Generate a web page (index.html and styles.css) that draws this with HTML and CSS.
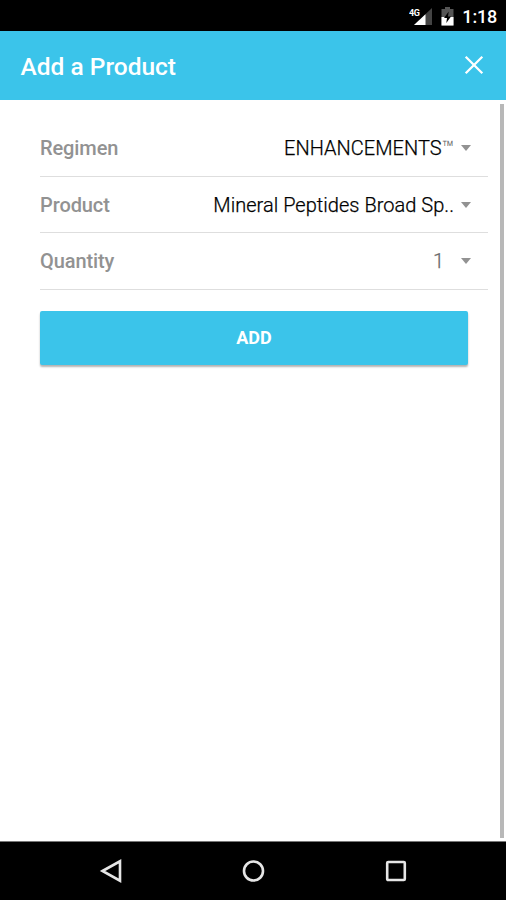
FILE: index.html
```html
<!DOCTYPE html>
<html lang="en">
<head>
<meta charset="utf-8">
<title>Add a Product</title>
<link rel="stylesheet" href="styles.css">
</head>
<body>
<div class="status">
  <svg class="signal" width="24" height="20" viewBox="0 0 24 20">
    <path d="M23 1V18H5Z" fill="#444"/>
    <path d="M16.500 7.200V18H5Z" fill="#fff"/>
    <text class="network" x="0" y="9">4G</text>
  </svg>
  <svg class="battery" width="13" height="19" viewBox="0 0 13 19">
    <path d="M4 0H9V2H12.500V18.500H.500V2H4Z" fill="#555"/>
    <path d="M.500 10H12.500V18.500H.500Z" fill="#fff"/>
    <path d="M7.700 4.500L3 11H6L5.300 16L10 9.500H7Z" fill="#000"/>
  </svg>
  <span class="clock">1:18</span>
</div>
<header class="toolbar">
  <h1>Add a Product</h1>
  <svg class="close" width="20" height="20" viewBox="0 0 20 20"><path d="M1.700 1.700L18.300 18.300M18.300 1.700L1.700 18.300"/></svg>
</header>
<main class="content">
  <div class="form">
    <div class="row"><span class="label">Regimen</span><span class="value">ENHANCEMENTS<span class="tm">™</span></span><span class="caret"></span></div>
    <div class="row"><span class="label">Product</span><span class="value">Mineral Peptides Broad Sp..</span><span class="caret"></span></div>
    <div class="row"><span class="label">Quantity</span><span class="value number">1</span><span class="caret"></span></div>
    <button class="add">ADD</button>
  </div>
  <div class="scrollbar"></div>
</main>
<nav class="navbar">
  <svg width="24" height="26" viewBox="0 0 24 26"><path d="M3.500 13L21 3.300V22.700Z"/></svg>
  <svg width="24" height="26" viewBox="0 0 24 26"><circle cx="11.500" cy="13" r="9.500"/></svg>
  <svg width="24" height="26" viewBox="0 0 24 26"><rect x="3.200" y="4" width="17.600" height="18" rx="1"/></svg>
</nav>
</body>
</html>
```

FILE: styles.css
```css
* { box-sizing: border-box; }
body {
  margin: 0;
  height: 900px;
  display: flex;
  flex-direction: column;
  overflow: hidden;
  background: #fff;
  font-family: Roboto, "Liberation Sans", sans-serif;
}
.status {
  height: 31px;
  flex: none;
  display: flex;
  align-items: center;
  justify-content: flex-end;
  padding: 2px 9px 0 0;
  background: #000;
  color: #fff;
}
.signal { margin-right: 8px; }
.network {
  font-size: 9px;
  font-weight: 700;
  letter-spacing: -.5px;
  fill: #fff;
  stroke: #000;
  stroke-width: 1px;
  paint-order: stroke;
}
.battery { margin-right: 8px; }
.clock { font-size: 18px; line-height: 28px; font-weight: 500; letter-spacing: -.2px; }
.toolbar {
  height: 69px;
  flex: none;
  display: flex;
  align-items: center;
  justify-content: space-between;
  padding: 2px 22px 0 20.500px;
  background: #3bc4ea;
  color: #fff;
}
h1 { margin: 0; font-size: 24.500px; line-height: 32px; font-weight: 500; }
.close { fill: none; stroke: #fff; stroke-width: 2.300; margin-bottom: 4px; }
.content { flex: 1; display: flex; justify-content: space-between; }
.form { width: 448px; margin: 20px 0 0 40px; }
.row {
  height: 56.700px;
  display: flex;
  align-items: center;
  border-bottom: 1px solid #dedede;
  padding-right: 17px;
}
.label { font-size: 20px; line-height: 28px; font-weight: 500; letter-spacing: -.1px; color: #929292; }
.value {
  margin-left: auto;
  font-size: 20px;
  line-height: 28px;
  font-weight: 300;
  letter-spacing: .03px;
  color: #000;
  -webkit-text-stroke: .25px currentColor;
  white-space: nowrap;
}
.tm { color: #666; -webkit-text-stroke: 0; }
.number { color: #666; margin-right: 10px; }
.caret {
  margin-left: 7px;
  border: 5.500px solid transparent;
  border-top: 6px solid #929292;
  border-bottom: 0;
}
.add {
  display: block;
  width: 428px;
  height: 54px;
  margin-top: 21px;
  border: 0;
  border-radius: 2px;
  padding: 0;
  background: #3bc4ea;
  box-shadow: 0 2px 2px rgba(0, 0, 0, .3);
  color: #fff;
  font: 700 18px/24px Roboto, "Liberation Sans", sans-serif;
}
.scrollbar { width: 4px; margin: 4px 2px 3px 0; background: #b8b8b8; }
.navbar {
  height: 59px;
  flex: none;
  display: flex;
  justify-content: space-between;
  align-items: center;
  padding: 0 98px 0 99px;
  border-top: 1px solid #777;
  background: #000;
}
.navbar svg { fill: none; stroke: #e6e6e6; stroke-width: 2.600; }
```
